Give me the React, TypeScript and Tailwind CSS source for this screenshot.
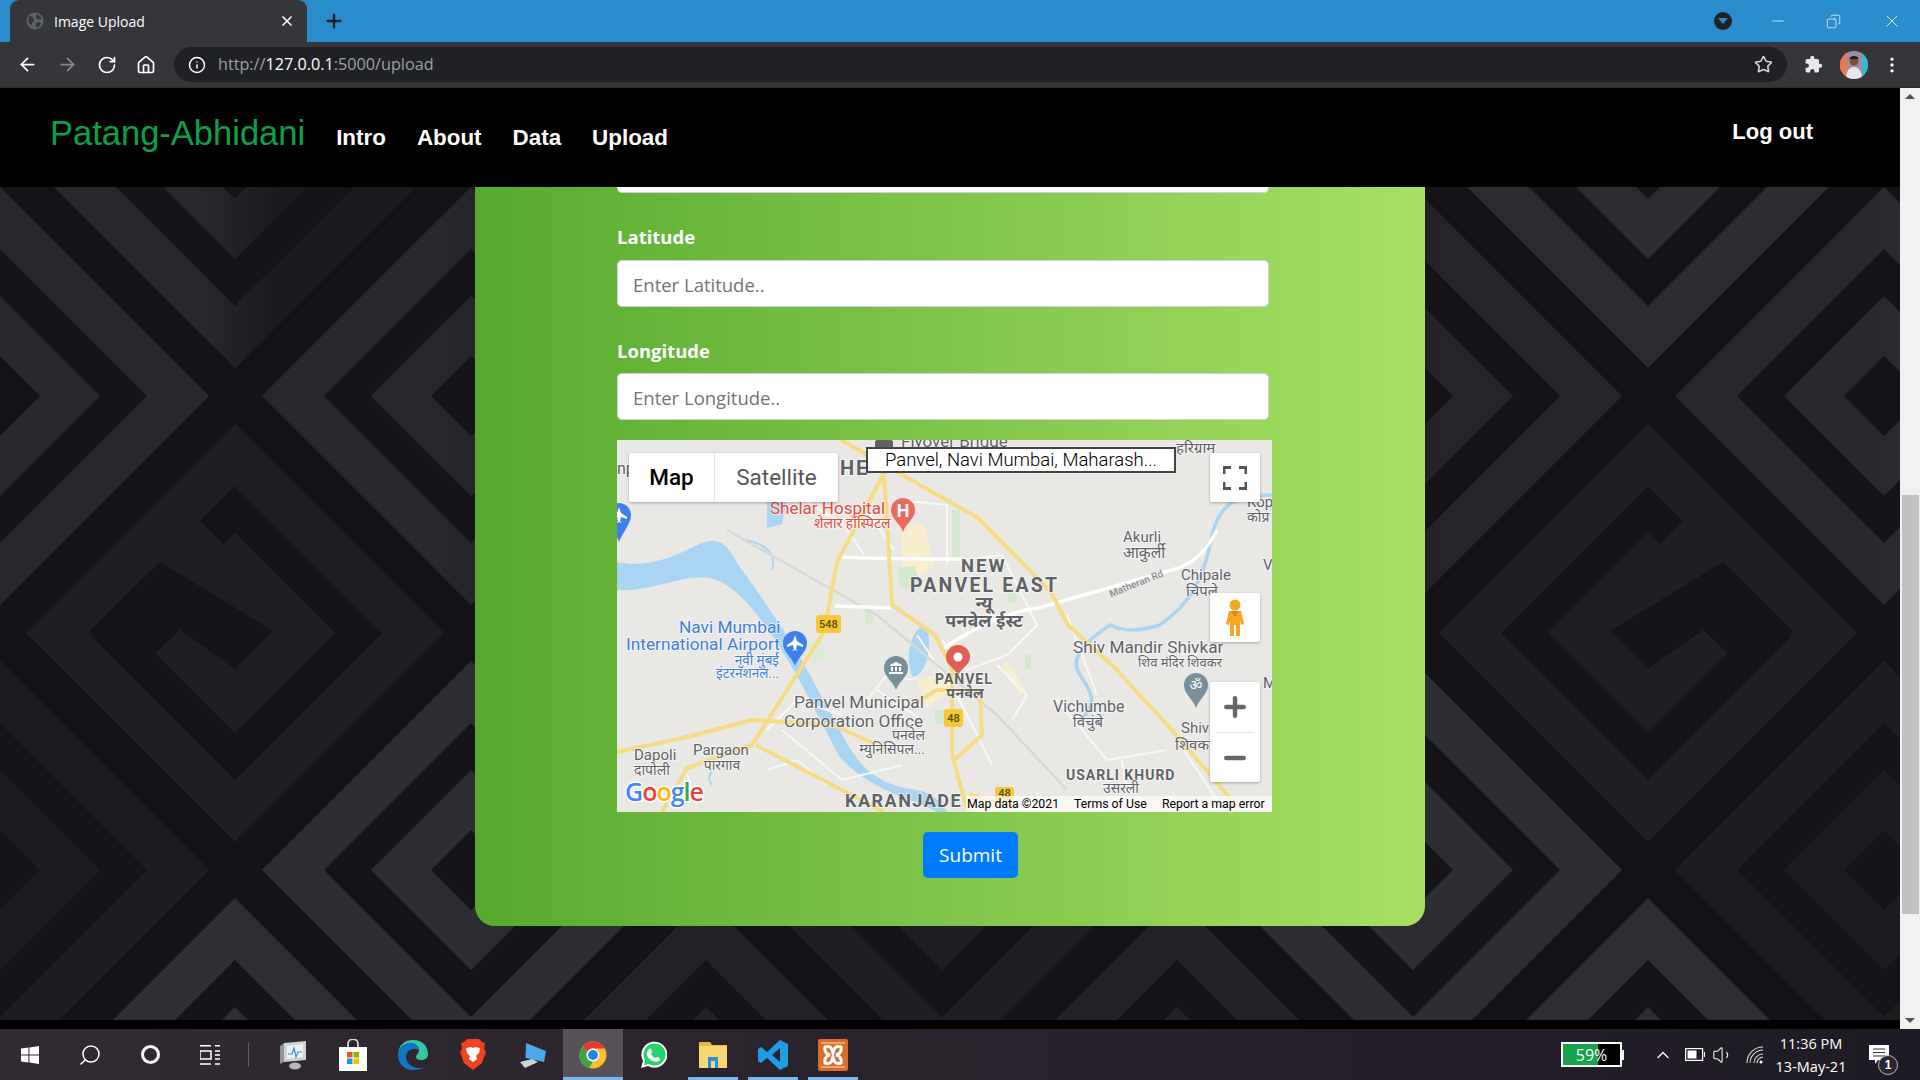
import React from 'react';
import { ArrowLeft, ArrowRight, Copy, Home, Info, Minus, MoreVertical, Plus, RotateCw, Search, Star, X, ChevronUp, Volume1 } from 'lucide-react';

// cells of the wall paper: centre x, centre y, colour on the left, colour on the right
const cells: [number, number, string, string][] = [
  [235, 159, '#27272e', '#1a1a1f'], [706, 159, '#26262d', '#26262d'], [1177, 159, '#26262d', '#26262d'], [1648, 159, '#2b2b32', '#2c2c33'],
  [0, 396, '#27272e', '#27272e'], [471, 396, '#27272e', '#222228'], [1413, 396, '#1d1d22', '#25252b'], [1884, 396, '#27272d', '#2b2b32'],
  [0, 870, '#1c1c21', '#1c1c21'], [471, 870, '#2d2d34', '#2d2d34'], [942, 870, '#1e1e24', '#1e1e24'], [1413, 870, '#2d2d34', '#2d2d34'], [1884, 870, '#1c1c21', '#1c1c21'],
  [235, 1107, '#2e2e35', '#2e2e35'], [706, 1107, '#222228', '#222228'], [1177, 1107, '#222228', '#222228'], [1648, 1107, '#2e2e35', '#2e2e35'],
];

function diamond(cx: number, cy: number, h: number) {
  return `${cx},${cy - h} ${cx + h},${cy} ${cx},${cy + h} ${cx - h},${cy}`;
}

// the two middle cells wind in a spiral instead of closed rings
function SpiralCell({ x, y, flip, c }: { x: number; y: number; flip: number; c: string }) {
  return (
    <g transform={`translate(${x} ${y}) scale(${flip} 1)`}>
      <polygon points={diamond(0, 0, 209)} fill={c} />
      <polygon points={diamond(0, 0, 147)} fill="#131318" />
      <polygon points="-147,0 -35,-112 0,-77 -100,23" fill={c} />
      <polygon points={diamond(0, 0, 100)} fill={c} />
      <polygon points="-145,-2 -75,-71 38,-2 0,36 -55,-3 -100,39" fill="#131318" />
    </g>
  );
}

function Wallpaper() {
  return (
    <svg className="absolute inset-0" width="1900" height="833" viewBox="0 187 1900 833">
      <defs>
        {cells.map(([x, , a, b], i) => (
          <linearGradient key={i} id={`cell${i}`} gradientUnits="userSpaceOnUse" x1={x - 209} y1="0" x2={x + 209} y2="0">
            <stop offset="0.42" stopColor={a} />
            <stop offset="0.6" stopColor={b} />
          </linearGradient>
        ))}
      </defs>
      <rect x="0" y="187" width="1900" height="833" fill="#121217" />
      {cells.map(([x, y], i) => (
        <g key={i}>
          <polygon points={diamond(x, y, 209)} fill={`url(#cell${i})`} />
          <polygon points={diamond(x, y, 147)} fill="#131318" />
          <polygon points={diamond(x, y, 100)} fill={`url(#cell${i})`} />
          <polygon points={diamond(x, y, 40)} fill="#131318" />
        </g>
      ))}
      <SpiralCell x={235} y={633} flip={1} c="#1e1e23" />
      <SpiralCell x={1648} y={633} flip={-1} c="#1f1f24" />
    </svg>
  );
}

function Lbl({ x, y, t, s = 15, c = '#5f6368', a = 'start', w = 400, sp = 0 }: { x: number; y: number; t: string; s?: number; c?: string; a?: 'start' | 'middle' | 'end'; w?: number; sp?: number }) {
  return (
    <text x={x} y={y} fontSize={s} fill={c} textAnchor={a} fontWeight={w} letterSpacing={sp} stroke="#ffffff" strokeWidth="2" strokeOpacity="0.55" paintOrder="stroke">
      {t}
    </text>
  );
}

function Pin({ x, y, b, c }: { x: number; y: number; b: number; c: string }) {
  return <path d={`M${x} ${b}C${x - 3} ${b - 9} ${x - 12} ${y + 9} ${x - 12} ${y}a12 12 0 0 1 24 0C${x + 12} ${y + 9} ${x + 3} ${b - 9} ${x} ${b}Z`} fill={c} />;
}

function Shield({ x, y, w, h, t }: { x: number; y: number; w: number; h: number; t: string }) {
  return (
    <g>
      <rect x={x} y={y} width={w} height={h} rx="3" fill="#f3c935" />
      <text x={x + w / 2} y={y + h - 5} fontSize="11" fontWeight="500" fill="#5c4a10" textAnchor="middle">{t}</text>
    </g>
  );
}

function MapDrawing() {
  const yellow = '#f6da84';
  const water = '#a9d5f3';
  return (
    <svg width="655" height="372" viewBox="0 0 655 372" className="block" fontFamily="Roboto, 'Noto Sans', sans-serif">
      <rect width="655" height="372" fill="#e9e8e5" />
      {/* built up areas */}
      <path d="M285 85l22 0 10 40-10 10-22 0Z" fill="#f7efcf" />
      <path d="M280 128l18-2 6 24-20-2Z" fill="#d3e8cf" />
      <path d="M335 70l8 0 0 50-8 0Z" fill="#d3e8cf" />
      <path d="M248 170l8 0 0 14-8 0ZM390 150l8-2 2 14-8 2ZM408 215l6 0 0 14-6 0Z" fill="#d3e8cf" />
      <path d="M190 205l12-8 8 20-14 10Z" fill="#dcebd6" />
      <path d="M300 240l35-10 0 20-25 18Z" fill="#f7efcf" />
      <rect x="318" y="270" width="9" height="14" fill="#d3e8cf" />
      <path d="M385 225l18 30 6-4-18-30Z" fill="#f7efcf" />
      {/* water */}
      <path d="M0 122C30 128 55 118 80 105 108 92 112 112 125 130 150 165 172 195 200 248L228 300C245 330 262 345 300 350 310 352 320 356 330 372L320 372C300 360 250 350 222 316L185 245C160 200 130 152 100 140 70 130 40 152 0 150Z" fill={water} />
      <path d="M150 62l16-12 4 8-5 26-15 4Z" fill={water} />
      <path d="M300 190c10-8 12 0 12 15 0 14-6 30-16 32-8-14-4-36 4-47Z" fill={water} />
      <path d="M655 55c-40 0-55 10-62 50-8 38-22 60-50 80-25 8-40 5-50 0-30 20-40 35-30 50 10 15 20 28 0 45" fill="none" stroke={water} strokeWidth="3.5" />
      <path d="M110 110c10 20 10 35 30 45M95 345c-4-5-4-8 0-14M130 100c20 5 30 15 25 30" fill="none" stroke={water} strokeWidth="2" />
      {/* small roads */}
      <g fill="none" stroke="#f8f8f6" strokeWidth="2">
        <path d="M187 60l40 25 20 30M247 65l30 45M280 60l50 5 0 60M345 120l40-5 35 70-30 30-40 15-25-30M300 195l40 60 35 70M150 290l30-30 45 15M260 250l45 30M165 290l60 50 60-15M440 260l50 60 60-10M505 320l5 40M560 300l40 60M450 175l30 80M150 330l30-10 30 25M70 335l10 30M380 225l30 30-15 25M250 260l20-25 25 5" />
      </g>
      <path d="M110 90l150 85 120 100 70 75" fill="none" stroke="#d8d8d6" strokeWidth="2.5" />
      {/* white roads */}
      <g fill="none" stroke="#ffffff" strokeWidth="3.5">
        <path d="M224 117C260 119 300 119 344 119" />
        <path d="M218 166L274 168" />
        <path d="M327 208C360 185 400 170 421 168L562 128C580 120 590 110 600 90" />
      </g>
      {/* highways */}
      <g fill="none" stroke={yellow} strokeWidth="4" strokeLinejoin="round">
        <path d="M224 0L361 78L434 152L451 185L498 228L553 288L613 358L620 372" />
        <path d="M267 33L220 122L207 192L135 305L70 328L45 372" />
        <path d="M267 33L275 165L318 195L335 228L335 315L348 362L352 372" />
        <path d="M0 312L70 297L135 280L216 285L267 308" />
        <path d="M139 305L267 372" />
        <path d="M363 252L365 295L335 322" />
        <path d="M300 262L320 250L363 250" />
        <path d="M352 354L400 368" />
      </g>
      {/* labels */}
      <Lbl x={284} y={7} t="Flyover Bridge" s={17} />
      <rect x="258" y="0" width="18" height="8" rx="2" fill="#5f6368" />
      <Lbl x={559} y={13} t="हरिग्राम" s={15} />
      <Lbl x={223} y={35} t="HE" s={20} w={700} sp={2} />
      <Lbl x={0} y={34} t="np" s={16} />
      <Lbl x={153} y={74} t="Shelar Hospital" s={17} c="#dd4b3e" />
      <Lbl x={197} y={88} t="शेलार हॉस्पिटल" s={14} c="#dd4b3e" />
      <Pin x={286} y={70} b={92} c="#ea6a5f" />
      <text x={286} y={77} fontSize="18" fontWeight="700" fill="#fff" textAnchor="middle">H</text>
      <Lbl x={506} y={102} t="Akurli" s={15} />
      <Lbl x={506} y={118} t="आकुर्ली" s={15.5} />
      <Lbl x={344} y={132} t="NEW" s={18.5} w={700} sp={2} />
      <Lbl x={293} y={152} t="PANVEL EAST" s={19.5} w={700} sp={2.2} />
      <Lbl x={367} y={169} t="न्यू" s={18} a="middle" w={700} />
      <Lbl x={367} y={187} t="पनवेल ईस्ट" s={18} a="middle" w={700} />
      <text x={519} y={147} fontSize="10" fontWeight="500" fill="#8a8e92" textAnchor="middle" transform="rotate(-22 519 143)">Matheran Rd</text>
      <Lbl x={564} y={140} t="Chipale" s={15} />
      <Lbl x={585} y={156} t="चिपले" s={15} a="middle" />
      <Lbl x={630} y={67} t="Kop" s={15} />
      <Lbl x={630} y={82} t="कोप्र" s={14} />
      <Lbl x={646} y={130} t="V" s={15} />
      <Lbl x={646} y={248} t="M" s={15} />
      <Lbl x={62} y={193} t="Navi Mumbai" s={17.3} c="#3f7fd9" />
      <Lbl x={9} y={210} t="International Airport" s={17.3} c="#3f7fd9" />
      <Lbl x={162} y={225} t="नवी मुंबई" s={13.5} c="#3f7fd9" a="end" />
      <Lbl x={162} y={238} t="इंटरनॅशनल..." s={13.5} c="#3f7fd9" a="end" />
      <Pin x={178} y={203} b={226} c="#3e80ee" />
      <path d="M178 195l2 6 6 4 0 2-6-2-1 4 2 2-3-1-3 1 2-2-1-4-6 2 0-2 6-4Z" fill="#fff" />
      <Pin x={2} y={75} b={102} c="#3e80ee" />
      <path d="M2 67l2 6 6 4 0 2-6-2-1 4 2 2-3-1-3 1 2-2-1-4-6 2 0-2 6-4Z" fill="#fff" />
      <Shield x={199} y={175} w={25} h={18} t="548" />
      <Shield x={327} y={269} w={19} h={18} t="48" />
      <Shield x={378} y={347} w={19} h={15} t="48" />
      <Pin x={279} y={228} b={250} c="#78909c" />
      <path d="M272 232h14v2h-14ZM273 226h12v-1l-6-3-6 3ZM274 227h2v4h-2ZM278 227h2v4h-2ZM282 227h2v4h-2Z" fill="#fff" />
      <Pin x={341} y={217} b={236} c="#dd5e52" />
      <circle cx="341" cy="217" r="4.5" fill="#fff" />
      <Lbl x={318} y={244} t="PANVEL" s={14} w={700} sp={1} />
      <Lbl x={348} y={258} t="पनवेल" s={14.5} a="middle" w={700} />
      <Lbl x={177} y={268} t="Panvel Municipal" s={17.2} />
      <Lbl x={167} y={287} t="Corporation Office" s={17.2} />
      <Lbl x={308} y={300} t="पनवेल" s={14} a="end" />
      <Lbl x={308} y={314} t="म्युनिसिपल..." s={14} a="end" />
      <Lbl x={456} y={213} t="Shiv Mandir Shivkar" s={17.2} />
      <Lbl x={521} y={227} t="शिव मंदिर शिवकर" s={13} />
      <Pin x={579} y={245} b={268} c="#78909c" />
      <text x={579} y={250} fontSize="14" fill="#fff" textAnchor="middle">ॐ</text>
      <Lbl x={436} y={272} t="Vichumbe" s={16} />
      <Lbl x={471} y={287} t="विचुंबे" s={15} a="middle" />
      <Lbl x={564} y={293} t="Shiv" s={15} />
      <Lbl x={558} y={310} t="शिवकर" s={15} />
      <Lbl x={449} y={340} t="USARLI KHURD" s={14} w={700} sp={1} />
      <Lbl x={504} y={353} t="उसरली" s={14} a="middle" />
      <Lbl x={17} y={320} t="Dapoli" s={15} />
      <Lbl x={17} y={335} t="दापोली" s={14} />
      <Lbl x={76} y={315} t="Pargaon" s={15} />
      <Lbl x={105} y={330} t="पारगाव" s={14} a="middle" />
      <Lbl x={228} y={367} t="KARANJADE" s={18} w={700} sp={1.5} />
      <text x={8} y={361} fontSize="25" fontWeight="600" fontFamily="'Open Sans', sans-serif" stroke="#ffffff" strokeWidth="3" paintOrder="stroke" letterSpacing="-1">
        <tspan fill="#4285f4">G</tspan>
        <tspan fill="#ea4335">o</tspan>
        <tspan fill="#fbbc05">o</tspan>
        <tspan fill="#4285f4">g</tspan>
        <tspan fill="#34a853">l</tspan>
        <tspan fill="#ea4335">e</tspan>
      </text>
    </svg>
  );
}

function MapPanel() {
  const control = 'absolute bg-white rounded-[2px] shadow-[0_1px_3px_rgba(0,0,0,0.3)]';
  return (
    <div className="relative w-[655px] h-[372px] mt-[20px] overflow-hidden font-['Roboto',sans-serif]">
      <MapDrawing />
      <div className={`${control} left-[12px] top-[13px] w-[209px] h-[49px] flex text-[22.500px]`}>
        <div className="w-[86px] flex items-center justify-center font-medium text-black border-r border-[#e6e6e6]">Map</div>
        <div className="flex-1 flex items-center justify-center text-[#565656]">Satellite</div>
      </div>
      <div className="absolute left-[249px] top-[7px] w-[310px] h-[26px] bg-white border-2 border-[#444] flex items-center justify-center text-[18.500px] font-light text-black leading-none">
        Panvel, Navi Mumbai, Maharash...
      </div>
      <div className={`${control} left-[593px] top-[13px] w-[50px] h-[49px] flex items-center justify-center`}>
        <svg width="24" height="24" viewBox="0 0 24 24" fill="none" stroke="#555" strokeWidth="3">
          <path d="M1 8V1.5H8M16 1.5H23V8M23 16V22.5H16M8 22.5H1V16" />
        </svg>
      </div>
      <div className={`${control} left-[593px] top-[153px] w-[50px] h-[49px] flex items-center justify-center`}>
        <svg width="22" height="38" viewBox="0 0 22 38">
          <circle cx="11" cy="6" r="5.5" fill="#f5a623" />
          <path d="M5 12h12l3 13-3 1-1-5v16h-4V26h-2v11H6V21l-1 5-3-1Z" fill="#f5a623" />
          <path d="M7 12l4 6 4-6Z" fill="#d9822b" />
        </svg>
      </div>
      <div className={`${control} left-[593px] top-[242px] w-[50px] h-[100px] flex flex-col items-center`}>
        <div className="h-[50px] flex items-center justify-center">
          <Plus size={30} strokeWidth={3.5} color="#666" />
        </div>
        <div className="w-[38px] h-px bg-[#e6e6e6]" />
        <div className="flex-1 flex items-center justify-center">
          <Minus size={30} strokeWidth={3.5} color="#666" />
        </div>
      </div>
      <div className="absolute left-[349px] right-0 bottom-0 h-[16px] bg-white/70 flex items-center text-[12.300px] text-black leading-none whitespace-nowrap">
        <span className="w-[108px] pl-px">Map data ©2021</span>
        <span className="w-[88px]">Terms of Use</span>
        <span>Report a map error</span>
      </div>
    </div>
  );
}

function Field({ label, placeholder, gap }: { label: string; placeholder: string; gap: string }) {
  return (
    <>
      <div className={`mt-[29px] h-[30px] leading-[30px] text-[18.500px] font-bold text-white ${gap}`}>{label}</div>
      <div className="w-[652px] h-[47px] bg-white border border-[#ced4da] rounded-[5px] pl-[15px] pt-[2px] flex items-center text-[18.500px] text-[#6c757d]">
        {placeholder}
      </div>
    </>
  );
}

function TabIcon() {
  return (
    <svg width="18" height="18" viewBox="0 0 18 18">
      <circle cx="9" cy="9" r="8.5" fill="#5f6368" />
      <path d="M3 4c3 0 4 1 5 3s-2 3-2 5-3 0-4-3ZM11 2c2 1 4 3 5 5-2 0-3 1-5 0s-1-3 0-5ZM10 11c2-1 4-1 5 0-1 2-2 4-4 5-1-2-2-3-1-5Z" fill="#35363a" />
    </svg>
  );
}

function ChromeIcon({ size = 28 }: { size?: number }) {
  return (
    <svg width={size} height={size} viewBox="0 0 48 48">
      <circle cx="24" cy="24" r="23" fill="#fbc02d" />
      <path d="M24 1a23 23 0 0 1 20 12H24a11 11 0 0 0-10 6L7 8.5A23 23 0 0 1 24 1Z" fill="#e53935" />
      <path d="M7 8.5L14 19a11 11 0 0 0 10 16l-7 12A23 23 0 0 1 7 8.5Z" fill="#43a047" />
      <circle cx="24" cy="24" r="11" fill="#fff" />
      <circle cx="24" cy="24" r="8.5" fill="#1e88e5" />
    </svg>
  );
}

function TaskSlot({ children, active, open }: { children: React.ReactNode; active?: boolean; open?: boolean }) {
  return (
    <div className={`relative w-[60px] h-full flex items-center justify-center ${active ? 'bg-[#57515a]' : ''}`}>
      {children}
      {(active || open) && <div className={`absolute bottom-0 h-[3px] bg-[#76b9ed] ${active ? 'inset-x-0' : 'inset-x-[5px]'}`} />}
    </div>
  );
}

function Taskbar() {
  return (
    <div className="h-[51px] flex items-stretch justify-between text-white bg-gradient-to-r from-[#322a33] to-[#1f1b25]">
      <div className="flex items-center">
        <TaskSlot>
          <svg width="18" height="18" viewBox="0 0 18 18" fill="#fff">
            <path d="M0 2.6l7.4-1V8.5H0ZM8.400 1.400L18 0V8.500H8.400ZM0 9.500H7.400V16.400L0 15.400ZM8.400 9.500H18V18L8.400 16.600Z" />
          </svg>
        </TaskSlot>
        <TaskSlot><Search size={24} strokeWidth={1.5} className="-scale-x-100" /></TaskSlot>
        <TaskSlot><div className="w-[19px] h-[19px] rounded-full border-[3px] border-white" /></TaskSlot>
        <TaskSlot>
          <svg width="20" height="20" viewBox="0 0 20 20" fill="none" stroke="#fff" strokeWidth="1.500">
            <path d="M0 .8h11M15 .8h5M0 6h11v8H0ZM15 6h5M15 10h5M15 14h5M0 19h11M15 19h5" />
          </svg>
        </TaskSlot>
        <div className="w-[23px] h-full flex items-center pl-[8px]"><div className="w-px h-[25px] bg-[#5f5a62]" /></div>
        <TaskSlot>
          <svg width="28" height="30" viewBox="0 0 28 30">
            <path d="M5 3L27 1v19L5 22Z" fill="#cfd2d4" />
            <path d="M8 6l16-2v13L8 19Z" fill="#eef2f5" />
            <path d="M9 14l4 0 2-6 2 9 2-5 4 0" fill="none" stroke="#3c8dc9" strokeWidth="1.200" />
            <path d="M1 6l4-3v19l-4 2Z" fill="#8f9497" />
            <ellipse cx="16" cy="26" rx="6" ry="3.500" fill="#b5b8ba" />
          </svg>
        </TaskSlot>
        <TaskSlot>
          <svg width="28" height="32" viewBox="0 0 28 32">
            <path d="M9 9V5a5 5 0 0 1 10 0v4" fill="none" stroke="#d8d8d8" strokeWidth="1.800" />
            <rect x="0" y="8" width="28" height="24" fill="#fff" />
            <rect x="8" y="13" width="5.500" height="5.500" fill="#f25022" />
            <rect x="14.500" y="13" width="5.500" height="5.500" fill="#7fba00" />
            <rect x="8" y="19.500" width="5.500" height="5.500" fill="#00a4ef" />
            <rect x="14.500" y="19.500" width="5.500" height="5.500" fill="#ffb900" />
          </svg>
        </TaskSlot>
        <TaskSlot>
          <svg width="30" height="30" viewBox="0 0 30 30">
            <path d="M15 0C24 0 30 6 30 14c0 4-3 6-7 6-3 0-5-1-5-3 0-3 3-3 3-7 0-4-4-7-8-7C6 3 0 8 0 15 0 6 6 0 15 0Z" fill="#37c6a1" />
            <path d="M0 15C0 8 6 3 13 3c4 0 8 3 8 7-6-3-13 0-13 7 0 6 6 11 13 11 2 0 4 0 6-1-3 2-7 3-12 3C7 30 0 24 0 15Z" fill="#0f77c6" />
          </svg>
        </TaskSlot>
        <TaskSlot>
          <svg width="26" height="31" viewBox="0 0 26 31">
            <path d="M7 0h12l3 3 3 1-1 6 2 3-4 11-9 7-9-7-4-11 2-3-1-6 3-1Z" fill="#f0441d" />
            <path d="M6 9l5-1 2 1 2-1 5 1-1 5-3 3 1 3-4 3-4-3 1-3-3-3Z" fill="#fff" />
          </svg>
        </TaskSlot>
        <TaskSlot>
          <svg width="28" height="28" viewBox="0 0 28 28">
            <path d="M7 2l20 8-2 11-18-4Z" fill="#4ca9ea" />
            <path d="M7 2l-1 15 1 0Z" fill="#1f6fb2" />
            <path d="M1 21l12-3 6 3-13 6Z" fill="#cfd3d6" />
          </svg>
        </TaskSlot>
        <TaskSlot active><ChromeIcon /></TaskSlot>
        <TaskSlot>
          <svg width="27" height="28" viewBox="0 0 27 28">
            <path d="M1 27l2-7A13 13 0 1 1 8 25Z" fill="#fff" />
            <path d="M4 24l1-5A11 11 0 1 1 9 23Z" fill="#25d366" />
            <path d="M9 8c2-2 3 2 3 3l-1 2c1 2 2 3 4 4l2-1c1 0 4 1 3 3-2 3-6 2-9 0s-5-5-4-8Z" fill="#fff" />
          </svg>
        </TaskSlot>
        <TaskSlot open>
          <svg width="28" height="27" viewBox="0 0 28 27">
            <path d="M0 1h11l2 3h15v23H0Z" fill="#e8b93c" />
            <rect x="0" y="5" width="28" height="22" fill="#f7d774" />
            <path d="M9 27V16h10v11h-3v-7h-4v7Z" fill="#2a8fd8" />
          </svg>
        </TaskSlot>
        <TaskSlot open>
          <svg width="30" height="30" viewBox="0 0 30 30">
            <path d="M22 0l8 4v22l-8 4L9 18 3 23l-3-2V9l3-2 6 5ZM22 8l-8 7 8 7Z" fill="#1e9de5" />
          </svg>
        </TaskSlot>
        <TaskSlot open>
          <svg width="30" height="32" viewBox="0 0 30 32">
            <rect width="30" height="32" rx="2" fill="#d96d2c" />
            <rect x="3" y="3" width="24" height="2" fill="#f3a56b" />
            <rect x="3" y="27" width="24" height="2" fill="#f3a56b" />
            <path d="M7 8c7-2 7 3 8 6 1-3 1-8 8-6 1 4-1 7-5 8 4 1 6 4 5 8-7 2-7-3-8-6-1 3-1 8-8 6-1-4 1-7 5-8-4-1-6-4-5-8Z" fill="none" stroke="#fff" strokeWidth="3" />
          </svg>
        </TaskSlot>
      </div>
      <div className="flex items-center w-[359px] shrink-0">
        <div className="flex items-center mr-[29px]">
          <div className="w-[61px] h-[25px] border-2 border-white bg-black flex relative">
            <div className="w-[35px] bg-[#16a34a]" />
            <span className="absolute inset-0 flex items-center justify-center text-[16px] font-['Open_Sans',sans-serif]">59%</span>
          </div>
          <div className="w-[2px] h-[10px] bg-white" />
        </div>
        <ChevronUp size={20} strokeWidth={1.500} className="mr-[12px]" />
        <svg width="20" height="13" viewBox="0 0 20 13" fill="none" stroke="#fff" strokeWidth="1.200" className="mr-[7px]">
          <rect x=".6" y=".6" width="17" height="11.800" />
          <rect x="2.500" y="2.500" width="9" height="8" fill="#fff" stroke="none" />
          <path d="M19.500 4v5" />
        </svg>
        <Volume1 size={22} strokeWidth={1.100} className="mr-[12px]" />
        <svg width="18" height="18" viewBox="0 0 18 18" fill="none" stroke="#ddd" strokeWidth="1.100">
          <path d="M1 17C1 8 8 1 17 1M4 17C4 10 10 4 17 4M8 17c0-5 4-9 9-9M11 17c0-3 3-6 6-6" />
          <circle cx="15" cy="16" r="1.500" fill="#fff" stroke="none" />
        </svg>
        <div className="w-[94px] text-center text-[14.500px] leading-[23px] font-['Open_Sans',sans-serif]">
          <div>11:36 PM</div>
          <div>13-May-21</div>
        </div>
        <div className="relative flex-1 h-full">
          <svg width="20" height="20" viewBox="0 0 20 20" className="absolute left-[11px] top-[16px]">
            <path d="M0 0h20v15H9l-3 4v-4H0Z" fill="#fff" />
            <path d="M4 4h12M4 7.500h12M4 11h12" stroke="#333" strokeWidth="1.200" />
          </svg>
          <div className="absolute left-[20px] top-[26px] w-[20px] h-[20px] rounded-full bg-[#2a2530] border border-[#bbb] text-[12px] leading-[18px] text-center font-bold">1</div>
        </div>
      </div>
    </div>
  );
}

export default function App() {
  return (
    <div className="w-[1920px] h-[1080px] overflow-hidden flex flex-col bg-black font-['Liberation_Sans',sans-serif]">
      {/* title bar */}
      <div className="h-[42px] bg-[#288ccd] flex items-end text-white pl-[10px]">
        <div className="w-[297px] h-[42px] bg-[#35363a] rounded-t-[9px] flex items-center pl-[16px] pr-[12px] gap-[10px] font-['Open_Sans',sans-serif] text-[14px]">
          <TabIcon />
          <span className="flex-1">Image Upload</span>
          <X size={16} strokeWidth={2.500} />
        </div>
        <div className="h-[42px] ml-[16px] flex items-center">
          <Plus size={22} strokeWidth={2.500} color="#202124" />
        </div>
        <div className="flex-1" />
        <div className="h-[42px] flex items-center">
          <div className="w-[18px] h-[18px] rounded-full bg-[#202124] flex items-center justify-center mr-[37px]">
            <div className="w-0 h-0 border-x-[5px] border-x-transparent border-t-[6px] border-t-[#288ccd]" />
          </div>
          <Minus size={18} strokeWidth={1} className="mr-[39px]" />
          <Copy size={15} strokeWidth={1.200} className="-scale-x-100 mr-[41px]" />
          <X size={20} strokeWidth={1} className="mr-[18px]" />
        </div>
      </div>
      {/* toolbar */}
      <div className="h-[45px] bg-[#35363a] flex items-start pt-[5px] text-white">
        <div className="w-[174px] h-[35px] flex items-center pl-[17px] gap-[19px]">
          <ArrowLeft size={21} />
          <ArrowRight size={21} color="#8a8b8d" />
          <RotateCw size={20} />
          <Home size={20} />
        </div>
        <div className="w-[1613px] h-[35px] rounded-full bg-[#202124] flex items-center pl-[14px] pr-[14px] font-['Open_Sans',sans-serif] text-[16.200px]">
          <Info size={18} />
          <span className="ml-[12px] flex-1 text-[#9aa0a6]">
            http://<span className="text-white">127.0.0.1</span>:5000/upload
          </span>
          <Star size={19} color="#d6d7d8" />
        </div>
        <div className="flex-1 h-[35px] flex items-center pl-[17px]">
          <svg width="19" height="19" viewBox="0 0 24 24" fill="#e8eaed">
            <path d="M20.500 11H19V7a2 2 0 0 0-2-2h-4V3.500a2.500 2.500 0 0 0-5 0V5H4a2 2 0 0 0-2 2v3.800h1.500a2.700 2.700 0 0 1 0 5.400H2V20a2 2 0 0 0 2 2h3.800v-1.500a2.700 2.700 0 0 1 5.400 0V22H17a2 2 0 0 0 2-2v-4h1.500a2.500 2.500 0 0 0 0-5Z" />
          </svg>
          <svg width="28" height="28" viewBox="0 0 28 28" className="ml-[17px]">
            <clipPath id="avatar"><circle cx="14" cy="14" r="14" /></clipPath>
            <g clipPath="url(#avatar)">
              <rect width="28" height="28" fill="#9d8fa0" />
              <rect width="7" height="28" fill="#f0764f" />
              <rect x="22" width="6" height="28" fill="#37b9d3" />
              <path d="M6 28c0-9 4-12 8-12s8 3 8 12Z" fill="#e9e6ea" />
              <circle cx="14" cy="10" r="4.500" fill="#7a4f3a" />
              <path d="M9.500 8c0-4 9-4 9 0Z" fill="#1c1a20" />
            </g>
          </svg>
          <MoreVertical size={20} className="ml-[14px]" />
        </div>
      </div>
      <div className="h-[1px] bg-[#2b2c2f]" />
      {/* page with the scroll bar */}
      <div className="flex-1 min-h-0 flex">
        <div className="w-[1900px] flex flex-col">
          <div className="h-[99px] bg-black flex items-start text-white font-bold text-[22.400px] pr-[87px]">
            <a className="ml-[50px] mt-[25px] font-normal text-[34.500px] leading-[40px] text-[#0ba14a]">Patang-Abhidani</a>
            <a className="ml-[31px] mt-[37px] leading-[26px]">Intro</a>
            <a className="ml-[31px] mt-[37px] leading-[26px]">About</a>
            <a className="ml-[31px] mt-[37px] leading-[26px]">Data</a>
            <a className="ml-[31px] mt-[37px] leading-[26px]">Upload</a>
            <a className="ml-auto mt-[31px] leading-[26px] text-[22px]">Log out</a>
          </div>
          <div className="relative flex-1 min-h-0 overflow-hidden">
            <Wallpaper />
            <form className="relative ml-[475px] w-[950px] h-[739px] rounded-b-[20px] bg-gradient-to-r from-[#56ab2f] to-[#a8e063] pl-[142px] flex flex-col items-start font-['Open_Sans',sans-serif]">
              <div className="w-[652px] h-[6px] bg-white border-b border-x border-[#ced4da] rounded-b-[5px]" />
              <Field label="Latitude" placeholder="Enter Latitude.." gap="mb-[8px]" />
              <Field label="Longitude" placeholder="Enter Longitude.." gap="mb-[7px]" />
              <MapPanel />
              <button type="button" className="mt-[20px] ml-[306px] w-[95px] h-[46px] rounded-[5px] bg-[#007bff] text-white text-[19px]">Submit</button>
            </form>
          </div>
          <div className="h-[9px] bg-black" />
        </div>
        <div className="w-[20px] bg-[#f1f1f1] flex flex-col items-center">
          <div className="h-[17px] flex items-center justify-center">
            <div className="w-0 h-0 border-x-[5px] border-x-transparent border-b-[5px] border-b-[#505050]" />
          </div>
          <div className="w-[17px] h-[419px] bg-[#c1c1c1] mt-[390px]" />
          <div className="flex-1" />
          <div className="h-[17px] flex items-center justify-center">
            <div className="w-0 h-0 border-x-[5px] border-x-transparent border-t-[5px] border-t-[#505050]" />
          </div>
        </div>
      </div>
      <Taskbar />
    </div>
  );
}
